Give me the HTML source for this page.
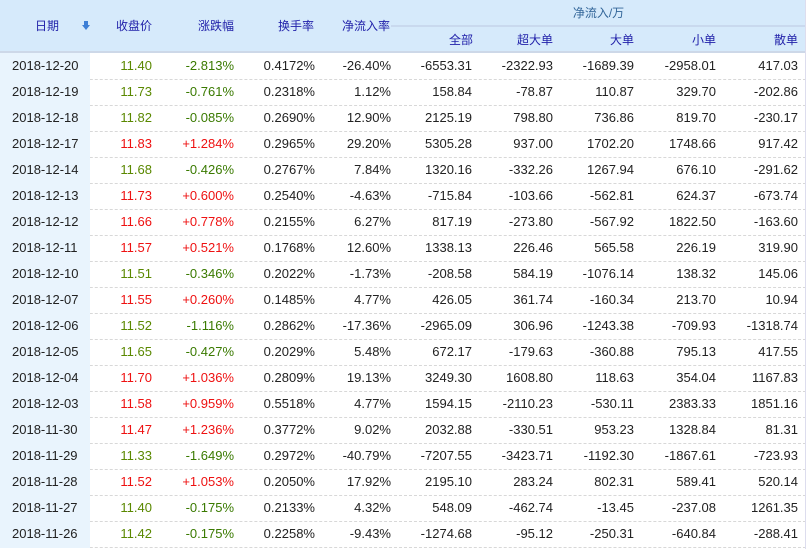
<!DOCTYPE html>
<html><head><meta charset="utf-8"><style>
body{margin:0;width:810px;height:549px;overflow:hidden;background:#fff;font-family:"Liberation Sans","Noto Sans CJK SC",sans-serif;font-size:13px}
.hd{position:absolute;left:0;top:0;width:806px;height:51px;background:#d6eafb;border-bottom:2px solid #cdd8e8}
.t{position:absolute;white-space:nowrap}
.h{color:#2222aa;font-size:12px}
.row{position:absolute;left:0;width:806px;height:26px;border-bottom:1px dashed #d8d8d8}
.dc{position:absolute;left:0;top:0;width:90px;height:27px;background:#e9f4fd}
.c{position:absolute;top:5px;text-align:right;color:#222}
.g{color:#3a7a00}.r{color:#ee1111}.o{color:#5a8800}
</style></head><body>
<div class="hd">
<div class="t" style="left:391px;top:25px;width:415px;border-top:2px solid #c9d9ee"></div>
<div class="t" style="left:391px;top:4px;width:415px;text-align:center;color:#336699;font-size:12px">净流入/万</div>
<div class="t h" style="left:35px;top:17px">日期</div>
<div class="t" style="left:82px;top:25px;width:0;height:0;border-left:4px solid transparent;border-right:4px solid transparent;border-top:5px solid #3d7fd6"></div>
<div class="t" style="left:84px;top:21px;width:4px;height:4px;background:#3d7fd6"></div>
<div class="t h" style="left:116px;top:17px">收盘价</div>
<div class="t h" style="left:198px;top:17px">涨跌幅</div>
<div class="t h" style="left:278px;top:17px">换手率</div>
<div class="t h" style="left:342px;top:17px">净流入率</div>
<div class="t h" style="left:449px;top:31px">全部</div>
<div class="t h" style="left:517px;top:31px">超大单</div>
<div class="t h" style="left:610px;top:31px">大单</div>
<div class="t h" style="left:692px;top:31px">小单</div>
<div class="t h" style="left:774px;top:31px">散单</div>
</div>
<div id="b"></div>
<div style="position:absolute;left:805px;top:0;width:1px;height:549px;background:#dde"></div>
<script>
var d=[["2018-12-20","11.40","-2.813%","0.4172%","-26.40%","-6553.31","-2322.93","-1689.39","-2958.01","417.03"],
["2018-12-19","11.73","-0.761%","0.2318%","1.12%","158.84","-78.87","110.87","329.70","-202.86"],
["2018-12-18","11.82","-0.085%","0.2690%","12.90%","2125.19","798.80","736.86","819.70","-230.17"],
["2018-12-17","11.83","+1.284%","0.2965%","29.20%","5305.28","937.00","1702.20","1748.66","917.42"],
["2018-12-14","11.68","-0.426%","0.2767%","7.84%","1320.16","-332.26","1267.94","676.10","-291.62"],
["2018-12-13","11.73","+0.600%","0.2540%","-4.63%","-715.84","-103.66","-562.81","624.37","-673.74"],
["2018-12-12","11.66","+0.778%","0.2155%","6.27%","817.19","-273.80","-567.92","1822.50","-163.60"],
["2018-12-11","11.57","+0.521%","0.1768%","12.60%","1338.13","226.46","565.58","226.19","319.90"],
["2018-12-10","11.51","-0.346%","0.2022%","-1.73%","-208.58","584.19","-1076.14","138.32","145.06"],
["2018-12-07","11.55","+0.260%","0.1485%","4.77%","426.05","361.74","-160.34","213.70","10.94"],
["2018-12-06","11.52","-1.116%","0.2862%","-17.36%","-2965.09","306.96","-1243.38","-709.93","-1318.74"],
["2018-12-05","11.65","-0.427%","0.2029%","5.48%","672.17","-179.63","-360.88","795.13","417.55"],
["2018-12-04","11.70","+1.036%","0.2809%","19.13%","3249.30","1608.80","118.63","354.04","1167.83"],
["2018-12-03","11.58","+0.959%","0.5518%","4.77%","1594.15","-2110.23","-530.11","2383.33","1851.16"],
["2018-11-30","11.47","+1.236%","0.3772%","9.02%","2032.88","-330.51","953.23","1328.84","81.31"],
["2018-11-29","11.33","-1.649%","0.2972%","-40.79%","-7207.55","-3423.71","-1192.30","-1867.61","-723.93"],
["2018-11-28","11.52","+1.053%","0.2050%","17.92%","2195.10","283.24","802.31","589.41","520.14"],
["2018-11-27","11.40","-0.175%","0.2133%","4.32%","548.09","-462.74","-13.45","-237.08","1261.35"],
["2018-11-26","11.42","-0.175%","0.2258%","-9.43%","-1274.68","-95.12","-250.31","-640.84","-288.41"]];
var R=[152,234,315,391,472,553,634,716,798],h="";
d.forEach(function(r,i){var up=r[2][0]=="+";h+='<div class="row" style="top:'+(53+i*26)+'px"><div class="dc"></div><div class="c" style="left:12px;text-align:left">'+r[0]+'</div>';
for(var j=1;j<10;j++){var cl=j==1?(up?"r":"o"):j==2?(up?"r":"g"):"";h+='<div class="c '+cl+'" style="left:'+(R[j-1]-80)+'px;width:80px">'+r[j]+'</div>';}
h+='</div>';});document.getElementById("b").innerHTML=h;
</script>
</body></html>
